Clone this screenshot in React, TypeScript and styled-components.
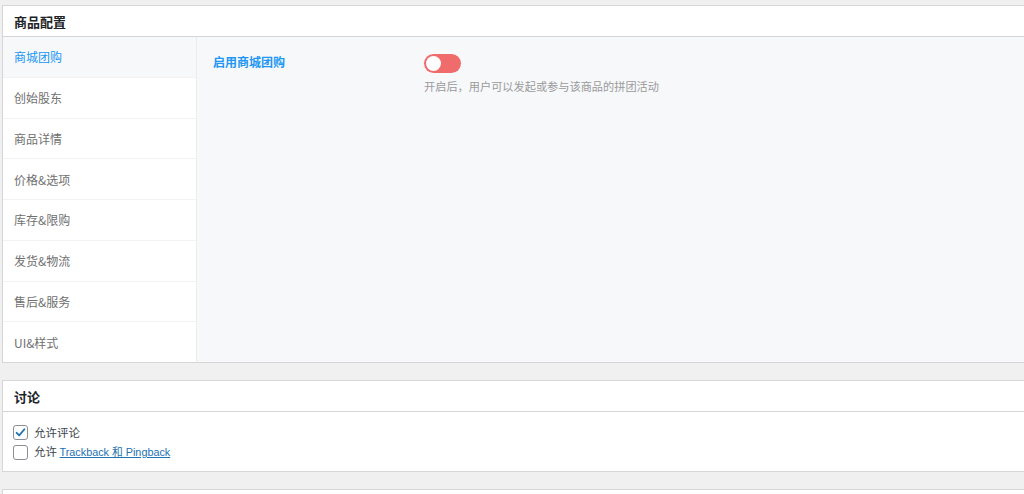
import React, { useState } from 'react';
import styled, { createGlobalStyle } from 'styled-components';

const GlobalStyle = createGlobalStyle`
  html, body {
    margin: 0;
    padding: 0;
    background: #f0f0f1;
    font-family: "Liberation Sans", "Noto Sans CJK SC", sans-serif;
    font-size: 13px;
    color: #1d2327;
  }
`;

const Page = styled.div`
  padding: 5px 0 0 2px;
  overflow: hidden;
  display: flex;
  flex-direction: column;
  gap: 17px;
`;

const Postbox = styled.div`
  background: #fff;
  border: 1px solid #d6d6d8;
  margin-right: -20px;
`;

const BoxHeader = styled.div`
  height: 30px;
  display: flex;
  align-items: center;
  padding-left: 11px;
  border-bottom: 1px solid #d6d6d8;
  font-family: "Noto Sans CJK SC", sans-serif;
  font-weight: 700;
  font-size: 13px;
  color: #1d2327;
`;

const TabsBody = styled.div`
  display: flex;
  height: 325px;
  background: #f7f8fa;
`;

const TabList = styled.div`
  width: 193px;
  display: flex;
  flex-direction: column;
  border-right: 1px solid #ececec;
`;

const Tab = styled.div<{ $active?: boolean }>`
  flex: 1;
  display: flex;
  align-items: center;
  padding: 0 0 0 11px;
  background: ${p => (p.$active ? '#f7f8fa' : '#fff')};
  color: ${p => (p.$active ? '#2196f3' : '#707070')};
  font-family: "Noto Sans CJK SC", sans-serif;
  font-size: 12px;
  border-bottom: 1px solid #f2f2f2;
  cursor: pointer;
  &:last-child {
    border-bottom: none;
  }
`;

const Panel = styled.div`
  flex: 1;
  padding: 16px 16px;
`;

const FieldRow = styled.div`
  display: flex;
`;

const FieldLabel = styled.div`
  width: 211px;
  color: #2196f3;
  font-family: "Noto Sans CJK SC", sans-serif;
  font-weight: 700;
  font-size: 12px;
`;

const FieldControl = styled.div`
  display: flex;
  flex-direction: column;
  gap: 4px;
  padding-top: 1px;
`;

const Switch = styled.button<{ $on: boolean }>`
  width: 37px;
  height: 19px;
  border: none;
  border-radius: 10px;
  padding: 2px;
  background: ${p => (p.$on ? '#2196f3' : '#ef6b6c')};
  display: flex;
  justify-content: ${p => (p.$on ? 'flex-end' : 'flex-start')};
  cursor: pointer;
`;

const Knob = styled.span`
  width: 15px;
  height: 15px;
  border-radius: 50%;
  background: #fff;
`;

const Hint = styled.div`
  color: #9a9a9a;
  font-family: "Noto Sans CJK SC", sans-serif;
  font-size: 11.2px;
  padding-top: 1px;
`;

const CheckBody = styled.div`
  height: 59px;
  padding: 13px 0 0 10px;
  box-sizing: border-box;
  display: flex;
  flex-direction: column;
  gap: 4px;
`;

const CheckLine = styled.label`
  display: flex;
  align-items: center;
  gap: 6px;
  font-family: "Noto Sans CJK SC", sans-serif;
  font-size: 11.5px;
  color: #3c434a;
  line-height: 15px;
`;

const Box = styled.span`
  width: 13px;
  height: 13px;
  border: 1px solid #8c8f94;
  border-radius: 3px;
  background: #fff;
  display: flex;
  align-items: center;
  justify-content: center;
`;

const Link = styled.a`
  color: #2271b1;
  text-decoration: underline;
  font-family: "Liberation Sans", "Noto Sans CJK SC", sans-serif;
  font-size: 10.8px;
`;

const tabs = ['商城团购', '创始股东', '商品详情', '价格&选项', '库存&限购', '发货&物流', '售后&服务', 'UI&样式'];

const Check = ({ on }: { on: boolean }) => (
  <Box>
    {on && (
      <svg width="13" height="13" viewBox="0 0 20 20">
        <path d="M4 10.5l4 3.8 8-9.3" fill="none" stroke="#2271b1" strokeWidth="2.8" strokeLinecap="round" strokeLinejoin="round" />
      </svg>
    )}
  </Box>
);

export default function App() {
  const [active, setActive] = useState(0);
  const [on, setOn] = useState(false);

  return (
    <>
      <GlobalStyle />
      <Page>
        <Postbox>
          <BoxHeader>商品配置</BoxHeader>
          <TabsBody>
            <TabList>
              {tabs.map((t, i) => (
                <Tab key={t} $active={i === active} onClick={() => setActive(i)}>
                  {t}
                </Tab>
              ))}
            </TabList>
            <Panel>
              <FieldRow>
                <FieldLabel>启用商城团购</FieldLabel>
                <FieldControl>
                  <Switch $on={on} onClick={() => setOn(!on)}>
                    <Knob />
                  </Switch>
                  <Hint>开启后，用户可以发起或参与该商品的拼团活动</Hint>
                </FieldControl>
              </FieldRow>
            </Panel>
          </TabsBody>
        </Postbox>

        <Postbox>
          <BoxHeader>讨论</BoxHeader>
          <CheckBody>
            <CheckLine>
              <Check on />
              允许评论
            </CheckLine>
            <CheckLine>
              <Check on={false} />
              <span>
                允许 <Link href="#">Trackback 和 Pingback</Link>
              </span>
            </CheckLine>
          </CheckBody>
        </Postbox>

        <Postbox>
          <BoxHeader />
        </Postbox>
      </Page>
    </>
  );
}
